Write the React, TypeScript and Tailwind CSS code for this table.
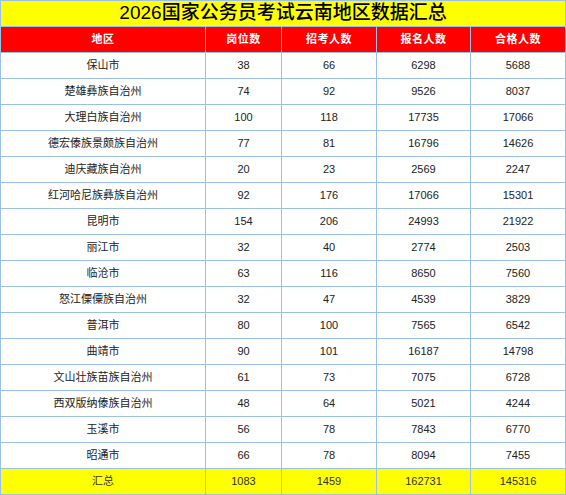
import React from "react";

interface RowData {
  region: string;
  posts: number;
  hires: number;
  applicants: number;
  qualified: number;
}

const rows: RowData[] = [
  { region: "保山市", posts: 38, hires: 66, applicants: 6298, qualified: 5688 },
  { region: "楚雄彝族自治州", posts: 74, hires: 92, applicants: 9526, qualified: 8037 },
  { region: "大理白族自治州", posts: 100, hires: 118, applicants: 17735, qualified: 17066 },
  { region: "德宏傣族景颇族自治州", posts: 77, hires: 81, applicants: 16796, qualified: 14626 },
  { region: "迪庆藏族自治州", posts: 20, hires: 23, applicants: 2569, qualified: 2247 },
  { region: "红河哈尼族彝族自治州", posts: 92, hires: 176, applicants: 17066, qualified: 15301 },
  { region: "昆明市", posts: 154, hires: 206, applicants: 24993, qualified: 21922 },
  { region: "丽江市", posts: 32, hires: 40, applicants: 2774, qualified: 2503 },
  { region: "临沧市", posts: 63, hires: 116, applicants: 8650, qualified: 7560 },
  { region: "怒江傈僳族自治州", posts: 32, hires: 47, applicants: 4539, qualified: 3829 },
  { region: "普洱市", posts: 80, hires: 100, applicants: 7565, qualified: 6542 },
  { region: "曲靖市", posts: 90, hires: 101, applicants: 16187, qualified: 14798 },
  { region: "文山壮族苗族自治州", posts: 61, hires: 73, applicants: 7075, qualified: 6728 },
  { region: "西双版纳傣族自治州", posts: 48, hires: 64, applicants: 5021, qualified: 4244 },
  { region: "玉溪市", posts: 56, hires: 78, applicants: 7843, qualified: 6770 },
  { region: "昭通市", posts: 66, hires: 78, applicants: 8094, qualified: 7455 },
];

const headers = ["地区", "岗位数", "招考人数", "报名人数", "合格人数"];
const totals = ["汇总", "1083", "1459", "162731", "145316"];

export default function App() {
  return (
    <div
      className="w-[566px] h-[495px] bg-white"
      style={{ fontFamily: '"Liberation Sans", "Noto Sans CJK SC", sans-serif' }}
    >
      <div className="grid grid-cols-[204px_75px_94px_93px_94px] auto-rows-[25px] gap-px p-px bg-[#9bc2e6]">
        {/* Title */}
        <div className="col-span-5 bg-[#ffff00] flex items-center justify-center text-[19px] font-medium text-black">
          2026国家公务员考试云南地区数据汇总
        </div>

        {/* Header */}
        {headers.map((h) => (
          <div
            key={h}
            className="bg-[#ff0000] flex items-center justify-center text-[11px] tracking-[0.5px] font-bold text-white"
          >
            {h}
          </div>
        ))}

        {/* Data */}
        {rows.map((r) =>
          [r.region, r.posts, r.hires, r.applicants, r.qualified].map((v, i) => (
            <div
              key={r.region + i}
              className="bg-white flex items-center justify-center text-[11px] text-[#222]"
            >
              {v}
            </div>
          ))
        )}

        {/* Totals */}
        {totals.map((t) => (
          <div
            key={t}
            className="bg-[#ffff00] flex items-center justify-center text-[11px] text-[#333]"
          >
            {t}
          </div>
        ))}
      </div>
    </div>
  );
}
